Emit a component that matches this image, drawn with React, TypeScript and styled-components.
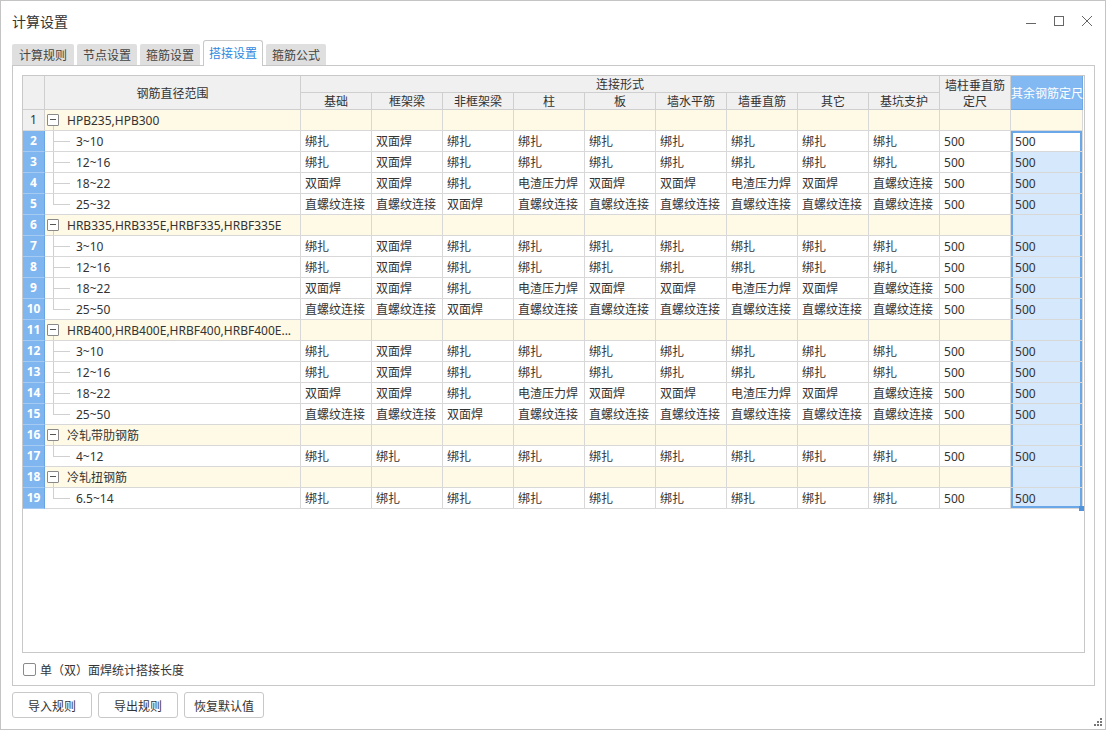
import React from "react";
import styled, { createGlobalStyle, css } from "styled-components";

const GlobalStyle = createGlobalStyle`
  html, body { margin: 0; padding: 0; background: #fff; }
  body {
    font-family: "Noto Sans", "Noto Sans CJK SC", sans-serif;
    font-size: 12px;
    color: #333;
  }
  * { box-sizing: border-box; }
`;

const A = ["绑扎", "双面焊", "绑扎", "绑扎", "绑扎", "绑扎", "绑扎", "绑扎", "绑扎"];
const B = ["双面焊", "双面焊", "绑扎", "电渣压力焊", "双面焊", "双面焊", "电渣压力焊", "双面焊", "直螺纹连接"];
const C = ["直螺纹连接", "直螺纹连接", "双面焊", "直螺纹连接", "直螺纹连接", "直螺纹连接", "直螺纹连接", "直螺纹连接", "直螺纹连接"];
const D = ["绑扎", "绑扎", "绑扎", "绑扎", "绑扎", "绑扎", "绑扎", "绑扎", "绑扎"];

const groups: { name: string; items: [string, string[]][] }[] = [
  { name: "HPB235,HPB300", items: [["3~10", A], ["12~16", A], ["18~22", B], ["25~32", C]] },
  { name: "HRB335,HRB335E,HRBF335,HRBF335E", items: [["3~10", A], ["12~16", A], ["18~22", B], ["25~50", C]] },
  { name: "HRB400,HRB400E,HRBF400,HRBF400E...", items: [["3~10", A], ["12~16", A], ["18~22", B], ["25~50", C]] },
  { name: "冷轧带肋钢筋", items: [["4~12", D]] },
  { name: "冷轧扭钢筋", items: [["6.5~14", D]] },
];

type Row =
  | { kind: "group"; label: string }
  | { kind: "item"; label: string; values: string[]; last: boolean };

const rows: Row[] = [];
groups.forEach((g) => {
  rows.push({ kind: "group", label: g.name });
  g.items.forEach(([label, values], i) =>
    rows.push({ kind: "item", label, values, last: i === g.items.length - 1 })
  );
});

const subHeads = ["基础", "框架梁", "非框架梁", "柱", "板", "墙水平筋", "墙垂直筋", "其它", "基坑支护"];
const tabs = ["计算规则", "节点设置", "箍筋设置", "搭接设置", "箍筋公式"];

const Window = styled.div`
  width: 1106px;
  height: 730px;
  border: 1px solid #c4c4c4;
  background: #fff;
  display: flex;
  flex-direction: column;
`;

const TitleBar = styled.div`
  height: 39px;
  flex: none;
  display: flex;
  align-items: center;
  padding: 0 13px 0 11px;
`;

const Title = styled.div`
  font-size: 14px;
  color: #333;
  font-family: "Noto Sans CJK SC", sans-serif;
`;

const Controls = styled.div`
  margin-left: auto;
  display: flex;
  gap: 18px;
  color: #666;
  svg { display: block; }
`;

const TabRow = styled.div`
  height: 25px;
  flex: none;
  display: flex;
  align-items: flex-end;
  gap: 3px;
  padding-left: 11px;
`;

const Tab = styled.div<{ $active?: boolean }>`
  width: 60px;
  height: 21px;
  line-height: 21px;
  text-align: center;
  background: #dfdfdf;
  border-radius: 2px 2px 0 0;
  color: #444;
  font-family: "Noto Sans CJK SC", sans-serif;
  &:first-child { width: 62px; }
  ${(p) =>
    p.$active &&
    css`
      height: 26px;
      line-height: 24px;
      margin-bottom: -1px;
      background: #fff;
      border: 1px solid #c8c8c8;
      border-bottom: none;
      border-radius: 3px 3px 0 0;
      color: #2f88e0;
      position: relative;
      z-index: 1;
    `}
`;

const Panel = styled.div`
  height: 621px;
  flex: none;
  margin: 0 10px 0 11px;
  border: 1px solid #c8c8c8;
  padding: 9px 9px 0 9px;
  display: flex;
  flex-direction: column;
`;

const GridBox = styled.div`
  height: 578px;
  border: 1px solid #c8c8c8;
  overflow: hidden;
  flex: none;
`;

const Table = styled.table`
  table-layout: fixed;
  border-collapse: separate;
  border-spacing: 0;
  width: 1060px;
`;

const Head = styled.th<{ $blue?: boolean }>`
  height: 17px;
  padding: 0;
  font-weight: normal;
  font-size: 12px;
  line-height: 16px;
  color: #333;
  background: #f0f0f0;
  border-right: 1px solid #cfcfcf;
  border-bottom: 1px solid #cfcfcf;
  text-align: center;
  vertical-align: middle;
  white-space: nowrap;
  font-family: "Noto Sans CJK SC", sans-serif;
  ${(p) =>
    p.$blue &&
    css`
      background: #82b9f2;
      color: #fff;
      border-color: #6fa8e6;
      text-align: left;
      overflow: visible;
    `}
`;

const NumCell = styled.td<{ $sel: boolean }>`
  height: 21px;
  padding: 0;
  text-align: center;
  line-height: 20px;
  background: #f0f0f0;
  color: #333;
  border-right: 1px solid #cfcfcf;
  border-bottom: 1px solid #d8d8d8;
  ${(p) =>
    p.$sel &&
    css`
      background: #7fb6ef;
      color: #fff;
      font-weight: bold;
      border-right-color: #68a4e4;
      border-bottom-color: #a6cbf2;
    `}
`;

const Cell = styled.td<{ $group?: boolean; $sel?: boolean; $active?: boolean; $first?: boolean; $end?: boolean }>`
  height: 21px;
  padding: 1px 0 0 4px;
  line-height: 19px;
  white-space: nowrap;
  overflow: hidden;
  border-right: 1px solid #d8d8d8;
  border-bottom: 1px solid #d8d8d8;
  background: ${(p) => (p.$group ? "#fffae5" : "#fff")};
  ${(p) =>
    p.$sel &&
    css`
      background: ${p.$active ? "#fff" : "#d5e8fc"};
      overflow: visible;
      position: relative;
      box-shadow: inset 2px 0 #6aa7e9, inset -2px 0 #6aa7e9
        ${p.$first ? ", inset 0 2px #6aa7e9" : ""} ${p.$end ? ", inset 0 -2px #6aa7e9" : ""};
    `}
`;

const Handle = styled.span`
  position: absolute;
  right: -2px;
  bottom: -3px;
  width: 5px;
  height: 5px;
  background: #4f93de;
`;

const NameCell = styled.td<{ $group?: boolean }>`
  height: 21px;
  padding: 0;
  border-right: 1px solid #d8d8d8;
  border-bottom: 1px solid #d8d8d8;
  background: ${(p) => (p.$group ? "#fffae5" : "#fff")};
  overflow: hidden;
`;

const NameInner = styled.div<{ $group?: boolean }>`
  display: flex;
  align-items: center;
  height: 20px;
  padding-left: ${(p) => (p.$group ? "2px" : "8px")};
`;

const MinusBox = styled.span`
  position: relative;
  flex: none;
  width: 12px;
  height: 12px;
  border: 1px solid #8a8a8a;
  border-radius: 1px;
  background: #fff;
  margin-right: 8px;
  &::before {
    content: "";
    position: absolute;
    left: 2px;
    right: 2px;
    top: 4px;
    border-top: 1px solid #555;
  }
  &::after {
    content: "";
    position: absolute;
    left: 5px;
    top: 11px;
    height: 6px;
    border-left: 1px solid #d0d0d0;
  }
`;

const Branch = styled.span<{ $last: boolean }>`
  position: relative;
  flex: none;
  width: 23px;
  align-self: stretch;
  &::before {
    content: "";
    position: absolute;
    left: 0;
    top: -1px;
    height: ${(p) => (p.$last ? "12px" : "22px")};
    border-left: 1px solid #d0d0d0;
  }
  &::after {
    content: "";
    position: absolute;
    left: 0;
    top: 10px;
    width: 17px;
    border-top: 1px solid #d0d0d0;
  }
`;

const Label = styled.span`
  white-space: nowrap;
`;

const CheckRow = styled.label`
  display: flex;
  align-items: center;
  height: 32px;
  padding-left: 1px;
  gap: 4px;
  font-family: "Noto Sans CJK SC", sans-serif;
`;

const CheckBox = styled.span`
  width: 13px;
  height: 13px;
  border: 1px solid #8a8a8a;
  border-radius: 2px;
  background: #fff;
`;

const Footer = styled.div`
  flex: 1;
  display: flex;
  align-items: flex-start;
  gap: 6px;
  padding: 6px 3px 0 11px;
`;

const Button = styled.button`
  width: 80px;
  height: 26px;
  padding: 0;
  background: #fff;
  border: 1px solid #c8c8c8;
  border-radius: 3px;
  font-family: "Noto Sans CJK SC", sans-serif;
  font-size: 12px;
  color: #333;
`;

const Grip = styled.svg`
  margin-left: auto;
  align-self: flex-end;
  margin-bottom: 3px;
`;

const App = () => {
  let n = 0;
  return (
    <>
      <GlobalStyle />
      <Window>
        <TitleBar>
          <Title>计算设置</Title>
          <Controls>
            <svg width="10" height="10" viewBox="0 0 10 10">
              <line x1="0" y1="7.5" x2="10" y2="7.5" stroke="currentColor" strokeWidth="1" />
            </svg>
            <svg width="10" height="10" viewBox="0 0 10 10">
              <rect x="0.5" y="0.5" width="9" height="9" fill="none" stroke="currentColor" strokeWidth="1" />
            </svg>
            <svg width="10" height="10" viewBox="0 0 10 10">
              <path d="M0 0L10 10M10 0L0 10" stroke="currentColor" strokeWidth="1" />
            </svg>
          </Controls>
        </TitleBar>

        <TabRow>
          {tabs.map((t) => (
            <Tab key={t} $active={t === "搭接设置"}>
              {t}
            </Tab>
          ))}
        </TabRow>

        <Panel>
          <GridBox>
            <Table>
              <colgroup>
                <col style={{ width: 22 }} />
                <col style={{ width: 256 }} />
                {Array.from({ length: 10 }).map((_, i) => (
                  <col key={i} style={{ width: 71 }} />
                ))}
                <col style={{ width: 72 }} />
              </colgroup>
              <thead>
                <tr>
                  <Head rowSpan={2} />
                  <Head rowSpan={2}>钢筋直径范围</Head>
                  <Head colSpan={9}>连接形式</Head>
                  <Head rowSpan={2}>
                    墙柱垂直筋
                    <br />
                    定尺
                  </Head>
                  <Head rowSpan={2} $blue>
                    其余钢筋定尺
                  </Head>
                </tr>
                <tr>
                  {subHeads.map((h) => (
                    <Head key={h}>{h}</Head>
                  ))}
                </tr>
              </thead>
              <tbody>
                {rows.map((r) => {
                  n += 1;
                  const sel = n >= 2;
                  const first = n === 2;
                  const end = n === rows.length;
                  if (r.kind === "group") {
                    return (
                      <tr key={n}>
                        <NumCell $sel={sel}>{n}</NumCell>
                        <NameCell $group>
                          <NameInner $group>
                            <MinusBox />
                            <Label>{r.label}</Label>
                          </NameInner>
                        </NameCell>
                        {Array.from({ length: 10 }).map((_, i) => (
                          <Cell key={i} $group />
                        ))}
                        <Cell $group $sel={sel} $first={first} $end={end} />
                      </tr>
                    );
                  }
                  return (
                    <tr key={n}>
                      <NumCell $sel={sel}>{n}</NumCell>
                      <NameCell>
                        <NameInner>
                          <Branch $last={r.last} />
                          <Label>{r.label}</Label>
                        </NameInner>
                      </NameCell>
                      {r.values.map((v, i) => (
                        <Cell key={i}>{v}</Cell>
                      ))}
                      <Cell>500</Cell>
                      <Cell $sel $active={first} $first={first} $end={end}>
                        500
                        {end && <Handle />}
                      </Cell>
                    </tr>
                  );
                })}
              </tbody>
            </Table>
          </GridBox>
          <CheckRow>
            <CheckBox />
            单（双）面焊统计搭接长度
          </CheckRow>
        </Panel>

        <Footer>
          <Button>导入规则</Button>
          <Button>导出规则</Button>
          <Button>恢复默认值</Button>
          <Grip width="8" height="8" viewBox="0 0 8 8">
            <g fill="#777">
              <rect x="6" y="0" width="2" height="2" />
              <rect x="3" y="3" width="2" height="2" />
              <rect x="6" y="3" width="2" height="2" />
              <rect x="0" y="6" width="2" height="2" />
              <rect x="3" y="6" width="2" height="2" />
              <rect x="6" y="6" width="2" height="2" />
            </g>
          </Grip>
        </Footer>
      </Window>
    </>
  );
};

export default App;
